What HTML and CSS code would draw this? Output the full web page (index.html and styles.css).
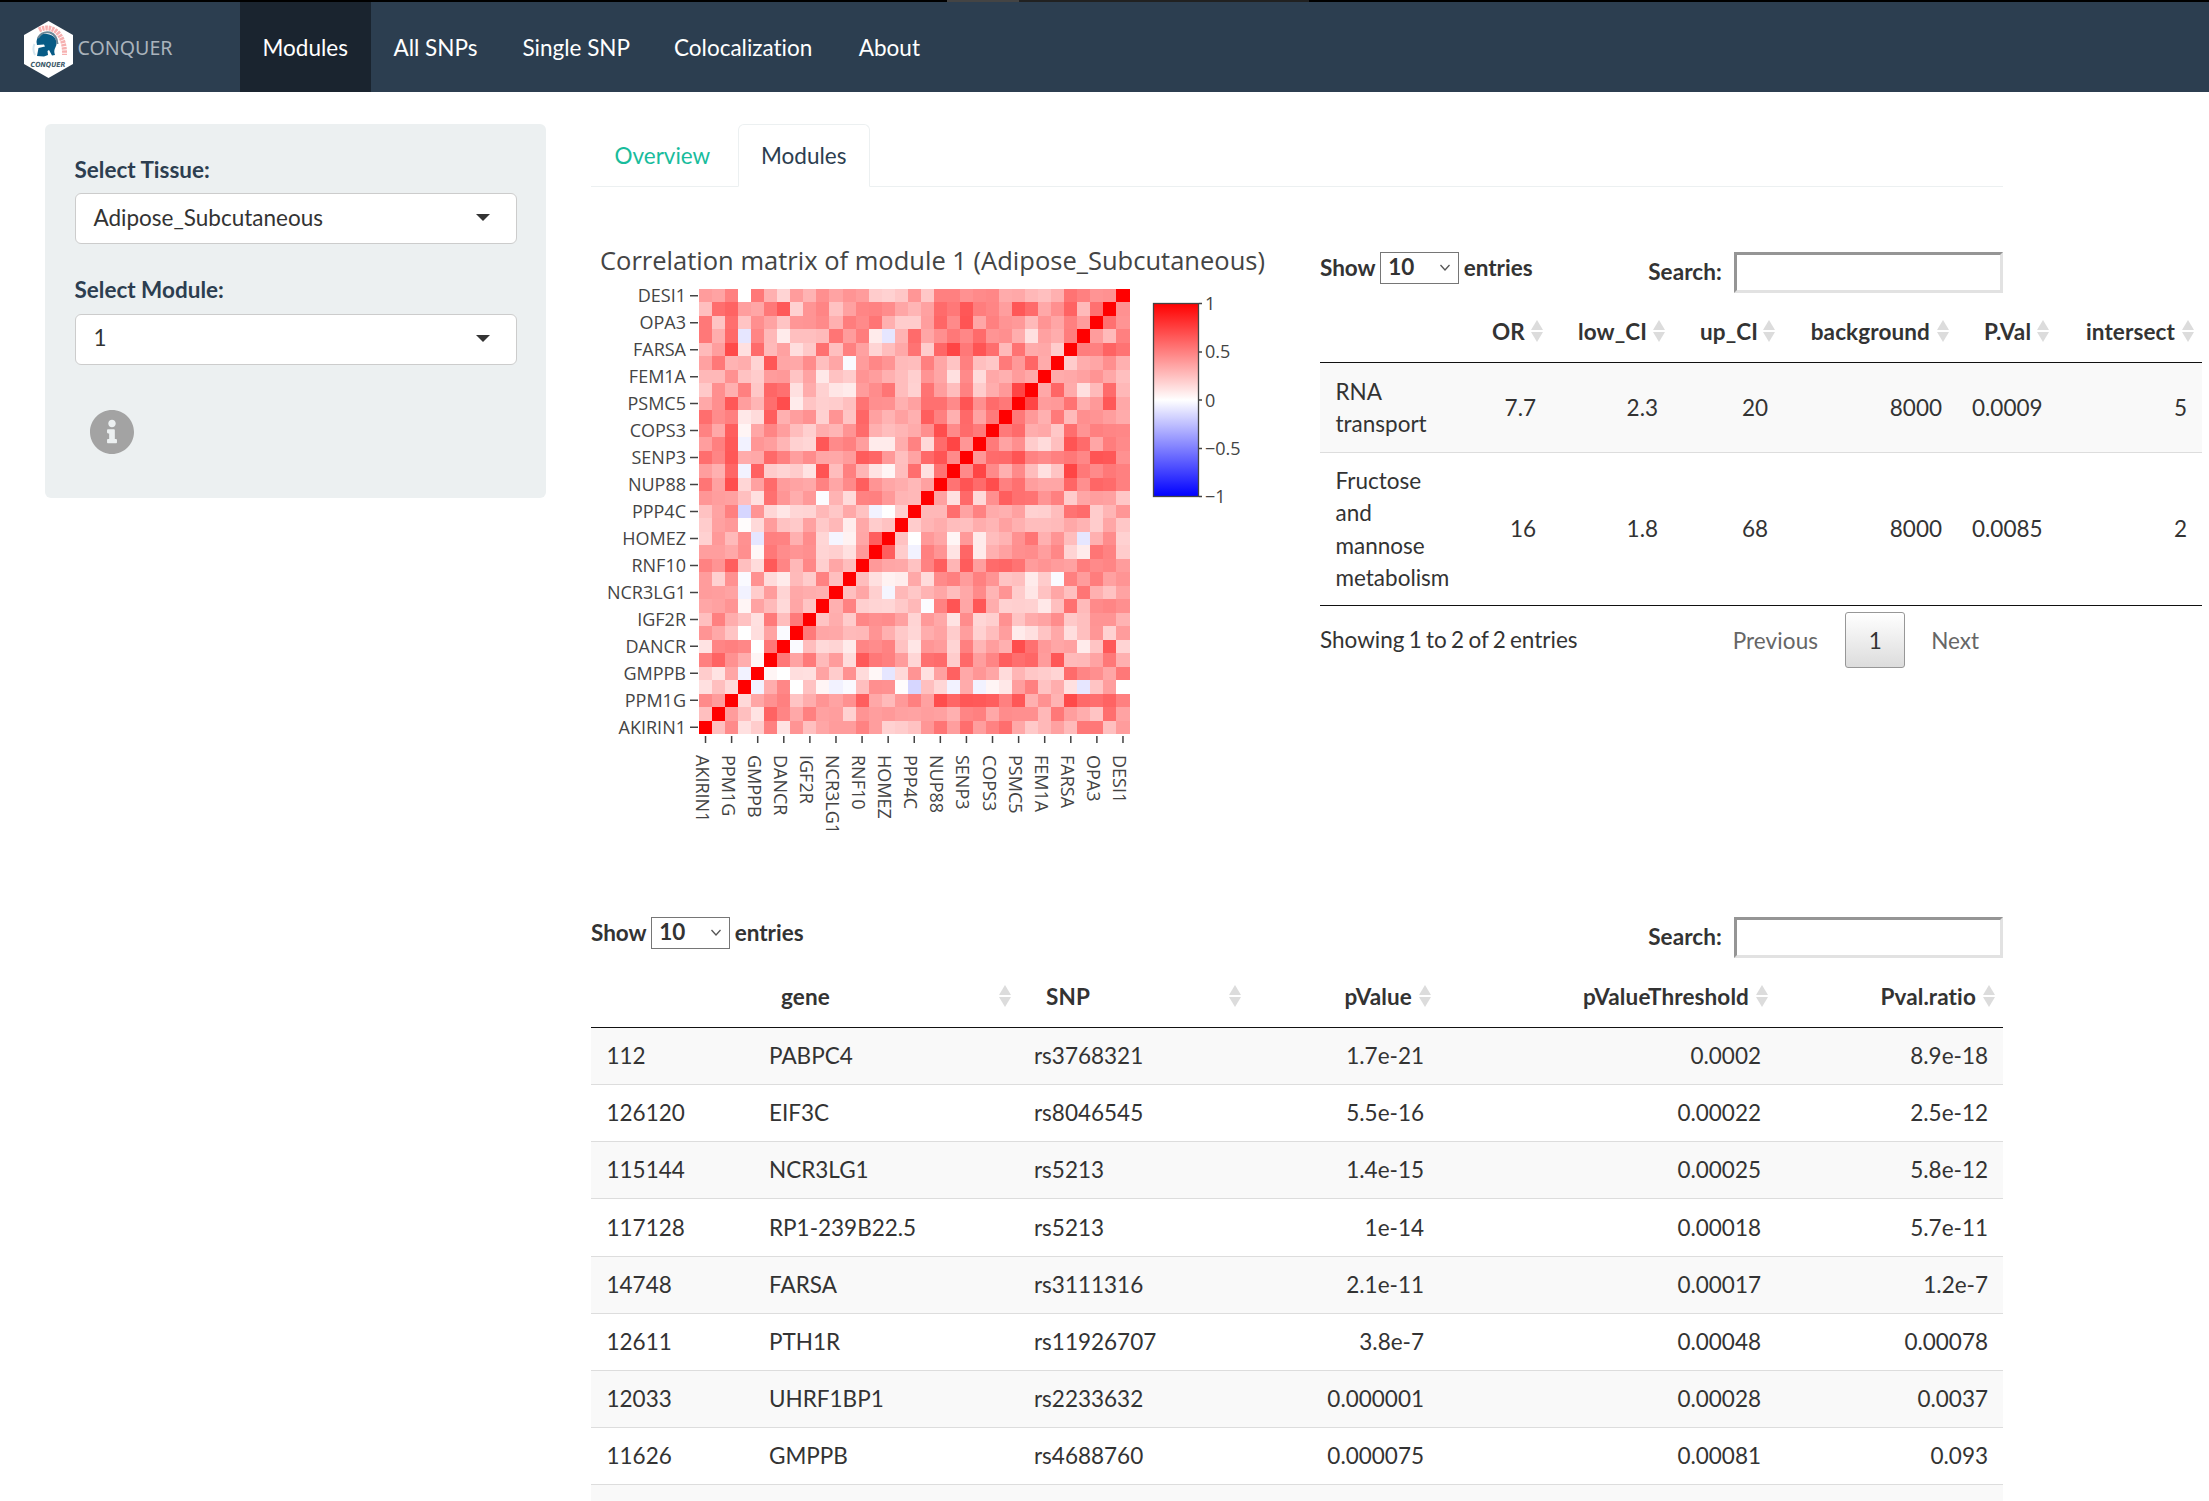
FILE: index.html
```html
<!DOCTYPE html>
<html lang="en">
<head>
<meta charset="utf-8">
<title>CONQUER</title>
<link rel="stylesheet" href="styles.css">
</head>
<body>
<div class="topline"><span class="topline-a"></span><span class="topline-b"></span></div>
<nav class="navbar">
  <div class="brand">
    <svg width="160" height="60" viewBox="0 0 160 60">
      <path d="M26.500 1 L51 15 V44 L26.500 58 L2 44 V15 Z" fill="#fff"/>
      <path d="M17 10 Q27 5 35 12 Q43 20 42.500 35" fill="none" stroke="#f6b0b0" stroke-width="5" stroke-dasharray="2.500 .8"/>
      <path d="M14.500 22 C15 15 20 13 25 14 C32 15 35 19 34.500 24 C34 28 31 29 33 35 L30 35.500 L27 30 L25.500 31 L26 35 L22 36.500 L15 36 L16.500 28 L23 26.500 L22 24.500 L15 25 Z" fill="#075b86"/>
      <path d="M16 18 Q20 11 28 12.500 Q35 15 35.500 24" fill="none" stroke="#6c8798" stroke-width="2"/>
      <path d="M12.500 24 Q10 29 13 35" fill="none" stroke="#d5e6ef" stroke-width="2"/>
      <text x="8.500" y="46.500" class="logo-small" textLength="35" lengthAdjust="spacingAndGlyphs">CONQUER</text>
      <text x="55.500" y="35" class="logo-name" textLength="95" lengthAdjust="spacingAndGlyphs">CONQUER</text>
    </svg>
  </div>
  <a class="nav-item active">Modules</a><a class="nav-item">All SNPs</a><a class="nav-item">Single SNP</a><a class="nav-item colocalization">Colocalization</a><a class="nav-item">About</a>
</nav>
<div class="page">
  <aside class="well">
    <label class="field-label">Select Tissue:</label>
    <div class="select"><span>Adipose_Subcutaneous</span><i class="caret"></i></div>
    <label class="field-label">Select Module:</label>
    <div class="select"><span>1</span><i class="caret"></i></div>
    <svg class="info" viewBox="8 8 496 496"><path d="M256 8C119.043 8 8 119.083 8 256c0 136.997 111.043 248 248 248s248-111.003 248-248C504 119.083 392.957 8 256 8zm0 110c23.196 0 42 18.804 42 42s-18.804 42-42 42-42-18.804-42-42 18.804-42 42-42zm56 254c0 6.627-5.373 12-12 12h-88c-6.627 0-12-5.373-12-12v-24c0-6.627 5.373-12 12-12h12v-64h-12c-6.627 0-12-5.373-12-12v-24c0-6.627 5.373-12 12-12h64c6.627 0 12 5.373 12 12v100h12c6.627 0 12 5.373 12 12v24z" fill="#a3a3a3"/></svg>
  </aside>
  <main class="main">
    <div class="tabs"><a class="tab">Overview</a><a class="tab current">Modules</a></div>
    <div class="upper">
      <svg class="plot" id="plot" width="700" height="640" viewBox="591 230 700 640">
        <defs><linearGradient id="scale" x1="0" y1="0" x2="0" y2="1"><stop offset="0" stop-color="#f00"/><stop offset=".5" stop-color="#fff"/><stop offset="1" stop-color="#00f"/></linearGradient></defs>
        <text x="600" y="269.700" class="plot-title" textLength="665">Correlation matrix of module 1 (Adipose_Subcutaneous)</text>
        <g id="cells" shape-rendering="crispEdges"></g>
        <g id="axes" class="axis"></g>
        <rect x="1153.500" y="303.500" width="45" height="193" fill="url(#scale)" stroke="#444" stroke-width="1.300"/>
        <g class="axis">
          <path d="M1199 303.500h3M1199 352h3M1199 400h3M1199 448.500h3M1199 496.500h3" stroke="#444" stroke-width="1.500"/>
          <text x="1205" y="310">1</text><text x="1205" y="358">0.5</text><text x="1205" y="407">0</text><text x="1205" y="455">−0.5</text><text x="1205" y="503">−1</text>
        </g>
      </svg>
      <section class="enrich">
        <div class="toolbar">
          <div class="length">Show <span class="mini">10<svg width="12" height="8" viewBox="0 0 12 8"><path d="M1.500 1 6 6l4.500-5" fill="none" stroke="#555" stroke-width="1.300"/></svg></span> entries</div>
          <div class="filter">Search:<input type="text" class="search"></div>
        </div>
        <table class="grid grid-enrich">
          <colgroup><col style="width:145px"><col style="width:86px"><col style="width:122px"><col style="width:110px"><col style="width:174px"><col style="width:100px"><col style="width:145px"></colgroup>
          <thead><tr><th></th><th class="num sort">OR</th><th class="num sort">low_CI</th><th class="num sort">up_CI</th><th class="num sort">background</th><th class="num sort">P.Val</th><th class="num sort">intersect</th></tr></thead>
          <tbody>
            <tr class="two-line"><td>RNA transport</td><td class="num">7.7</td><td class="num">2.3</td><td class="num">20</td><td class="num">8000</td><td class="num">0.0009</td><td class="num">5</td></tr>
            <tr class="four-line"><td>Fructose and mannose metabolism</td><td class="num">16</td><td class="num">1.8</td><td class="num">68</td><td class="num">8000</td><td class="num">0.0085</td><td class="num">2</td></tr>
          </tbody>
        </table>
        <div class="footer"><span class="summary">Showing 1 to 2 of 2 entries</span><div class="pager"><span class="page-link">Previous</span><span class="page-now">1</span><span class="page-link">Next</span></div></div>
      </section>
    </div>
    <div class="toolbar">
      <div class="length">Show <span class="mini">10<svg width="12" height="8" viewBox="0 0 12 8"><path d="M1.500 1 6 6l4.500-5" fill="none" stroke="#555" stroke-width="1.300"/></svg></span> entries</div>
      <div class="filter">Search:<input type="text" class="search"></div>
    </div>
    <table class="grid grid-snps">
      <colgroup><col style="width:163px"><col style="width:265px"><col style="width:230px"><col style="width:190px"><col style="width:337px"><col style="width:227px"></colgroup>
      <thead><tr><th></th><th class="sort">gene</th><th class="sort">SNP</th><th class="num sort">pValue</th><th class="num sort">pValueThreshold</th><th class="num sort">Pval.ratio</th></tr></thead>
      <tbody>
        <tr><td>112</td><td>PABPC4</td><td>rs3768321</td><td class="num">1.7e-21</td><td class="num">0.0002</td><td class="num">8.9e-18</td></tr>
        <tr><td>126120</td><td>EIF3C</td><td>rs8046545</td><td class="num">5.5e-16</td><td class="num">0.00022</td><td class="num">2.5e-12</td></tr>
        <tr><td>115144</td><td>NCR3LG1</td><td>rs5213</td><td class="num">1.4e-15</td><td class="num">0.00025</td><td class="num">5.8e-12</td></tr>
        <tr><td>117128</td><td>RP1-239B22.5</td><td>rs5213</td><td class="num">1e-14</td><td class="num">0.00018</td><td class="num">5.7e-11</td></tr>
        <tr><td>14748</td><td>FARSA</td><td>rs3111316</td><td class="num">2.1e-11</td><td class="num">0.00017</td><td class="num">1.2e-7</td></tr>
        <tr><td>12611</td><td>PTH1R</td><td>rs11926707</td><td class="num">3.8e-7</td><td class="num">0.00048</td><td class="num">0.00078</td></tr>
        <tr><td>12033</td><td>UHRF1BP1</td><td>rs2233632</td><td class="num">0.000001</td><td class="num">0.00028</td><td class="num">0.0037</td></tr>
        <tr><td>11626</td><td>GMPPB</td><td>rs4688760</td><td class="num">0.000075</td><td class="num">0.00081</td><td class="num">0.093</td></tr>
        <tr><td></td><td></td><td></td><td></td><td></td><td></td></tr>
      </tbody>
    </table>
  </main>
</div>
<script src="heatmap.js"></script>
</body>
</html>
```
FILE: styles.css
```css
* { box-sizing: border-box; }
html { overflow: hidden; }
body { margin: 0; height: 1501px; overflow: hidden; background: #fff; font-family: Lato, sans-serif; font-size: 22.5px; line-height: 32.14px; color: #333; font-variant-ligatures: none; }
.topline { display: flex; height: 2px; padding-left: 947px; background: #000; }
.topline-a { width: 72px; background: #444; }
.topline-b { width: 290px; background: #212121; }
.navbar { display: flex; height: 90px; background: #2c3e50; color: #fff; }
.brand { width: 240px; padding: 18px 0 0 22px; }
.logo-small { font: italic bold 7px "DejaVu Sans", sans-serif; fill: #3f5b6b; }
.logo-name { font: 19.5px "Noto Sans", sans-serif; fill: #aab3bc; }
.nav-item { padding: 29.5px 22.5px 0; }
.nav-item.active { width: 131px; background: #1a242f; }
.nav-item.colocalization { margin-left: -1px; padding-right: 24px; }

.page { display: flex; align-items: flex-start; gap: 45px; padding: 32px 0 0 45px; }
.well { flex: none; width: 501px; height: 374px; padding: 29.5px; border-radius: 6px; background: #ecf0f1; }
.field-label { display: block; margin-bottom: 7.5px; font-weight: 700; color: #2c3e50; }
.select { display: flex; justify-content: space-between; align-items: center; height: 51px; margin-bottom: 30px; padding: 0 26px 2px 18px; border: 1px solid #ccc; border-radius: 6px; background: #fff; }
.caret { border: 7px solid transparent; border-top: 7.5px solid #333; border-bottom: 0; }
.info { display: block; width: 44px; height: 44px; margin: 45.5px 0 0 15.5px; }

.main { flex: none; width: 1412px; }
.tabs { display: flex; height: 63px; border-bottom: 1px solid #ecf0f1; }
.tab { height: 63px; padding: 16px 23.5px 0; color: #18bc9c; }
.tab:first-child { width: 147px; }
.tab.current { width: 132px; padding-top: 15px; border: 1px solid #ecf0f1; border-bottom-color: #fff; border-radius: 6px 6px 0 0; background: #fff; color: #2c3e50; padding-left: 22px; }

.upper { display: flex; height: 729px; padding-top: 43px; }
.plot { flex: none; margin-right: 29px; }
.plot-title { font: 25.5px "Open Sans", sans-serif; fill: #444; }
.axis text { font: 18px "Open Sans", sans-serif; fill: #444; }
.enrich { flex: none; width: 683px; padding-top: 21px; }

.toolbar { display: flex; justify-content: space-between; height: 49px; font-weight: 700; }
.length { display: flex; gap: 4.5px; height: 34px; align-items: center; }
.mini { display: flex; align-items: center; justify-content: space-between; width: 79px; height: 32px; padding: 0 7px 1px; border: 1.5px solid #767676; }
.filter { display: flex; align-items: center; gap: 12px; height: 42px; letter-spacing: .1px; }
.search { width: 269px; height: 41px; margin: 0; border: 3px solid; border-color: #959595 #e2e2e2 #e2e2e2 #959595; background: #fff; }

.grid { table-layout: fixed; border-collapse: separate; border-spacing: 0; }
.grid-enrich { width: 882px; }
.grid-snps { width: 1412px; }
.grid th { height: 63px; padding: 2px 27px 0; border-bottom: 1px solid #111; font-weight: 700; letter-spacing: .12px; text-align: left; vertical-align: middle; }
.grid td { height: 57px; padding: 1px 15px 0; border-bottom: 1px solid #ddd; vertical-align: middle; }
.grid td:first-child { padding-left: 15.5px; }
.grid .num { text-align: right; }
.grid tbody tr:nth-child(odd) { background: #f9f9f9; }
.grid-snps tbody tr:nth-child(4) td { height: 58px; }
.grid .two-line td { height: 90px; }
.grid .four-line td { height: 153px; border-bottom-color: #111; }
.sort { position: relative; white-space: nowrap; }
.sort::before, .sort::after { content: ""; position: absolute; right: 8px; border: 6px solid transparent; }
.sort::before { top: 20px; border-top: 0; border-bottom: 10px solid #dcdcdc; }
.sort::after { top: 32px; border-bottom: 0; border-top: 10px solid #dcdcdc; }

.footer { display: flex; justify-content: space-between; align-items: center; height: 56px; margin-top: 6px; }
.summary { word-spacing: -1.5px; }
.pager { display: flex; align-items: center; }
.page-link { padding: 2px 24px 0 26px; color: #666; }
.page-link:first-child { padding-right: 27px; letter-spacing: .1px; }
.page-now { width: 60px; height: 56px; padding-top: 12px; border: 1px solid #979797; border-radius: 3px; background: linear-gradient(#fff, #dcdcdc); text-align: center; }
```
FILE: heatmap.js
```js
// Correlation percentages, one row per gene, up to the diagonal (always 100).
const lower = [
  [],
  [25],
  [46,39],
  [12,25,15],
  [20,11,35,-5],
  [50,61,43,32,4],
  [11,48,50,47,0,53],
  [42,34,23,0,13,36,-2],
  [25,50,32,24,12,52,26,52],
  [35,37,42,4,36,27,15,35,23],
  [39,38,36,-5,20,39,17,34,32,31],
  [39,18,43,-2,43,14,8,27,20,49,25],
  [49,42,63,25,14,65,48,28,47,19,35,26],
  [38,38,34,44,3,53,45,42,44,17,19,12,40],
  [18,40,27,43,-10,50,49,31,45,16,-4,5,35,63],
  [20,37,40,1,15,39,24,21,37,21,28,7,34,20,24],
  [24,36,50,-16,42,16,10,16,17,28,22,34,24,-5,0,20],
  [41,38,37,25,12,56,41,32,40,-1,30,14,49,50,40,29,28],
  [54,37,70,16,37,58,39,36,34,49,35,46,63,42,35,32,28,37],
  [38,31,60,-5,62,20,17,20,11,67,26,50,29,11,4,26,57,12,55],
  [57,48,66,33,34,59,50,38,45,35,34,39,64,60,40,25,36,59,67,46],
  [38,50,65,-5,41,38,29,18,16,66,46,50,38,8,8,32,49,15,58,73,41],
  [49,34,63,4,35,48,38,26,19,32,29,42,58,31,26,29,33,44,70,46,58,52],
  [57,45,50,9,14,63,31,38,43,18,42,23,60,37,30,37,31,63,50,31,59,36,52],
  [34,44,66,38,29,57,70,8,23,19,20,25,55,44,43,31,37,56,56,46,67,44,58,53],
  [21,44,31,50,22,60,56,12,33,18,10,8,39,45,54,26,18,55,38,26,49,20,32,40,73],
  [28,28,43,24,20,39,40,23,36,9,24,20,42,38,31,26,19,42,35,12,46,14,34,31,39,34],
  [37,53,30,32,17,66,35,34,45,25,35,-2,39,47,42,27,26,50,35,23,50,25,22,52,40,60,33],
  [27,38,71,12,58,27,37,13,21,56,25,50,37,17,26,34,55,20,60,73,53,67,57,27,55,33,34,20],
  [53,32,59,-10,48,28,8,25,25,27,54,39,51,8,-10,30,58,35,44,53,47,58,42,44,32,12,37,32,51],
  [53,23,57,23,44,36,23,41,42,46,31,51,46,54,31,20,20,38,60,46,67,35,50,42,40,27,42,35,50,39],
  [25,57,61,38,35,53,65,18,42,48,24,37,48,49,45,35,29,37,58,53,66,51,48,38,66,58,34,44,61,27,56],
  [39,36,50,0,53,31,17,39,30,44,36,42,39,20,18,22,41,22,50,50,43,46,47,33,34,28,25,31,55,50,42,43]
];
const genes = ["AKIRIN1","PPM1G","GMPPB","DANCR","IGF2R","NCR3LG1","RNF10","HOMEZ","PPP4C","NUP88","SENP3","COPS3","PSMC5","FEM1A","FARSA","OPA3","DESI1"];
const n = 33, left = 699, right = 1129.5, top0 = 289, bottom = 734;
const cw = (right - left) / n, ch = (bottom - top0) / n;
const value = (r, c) => r === c ? 100 : r > c ? lower[r][c] : lower[c][r];
function color(v) {
  const k = Math.round(255 * (1 - Math.abs(v) / 100));
  return v < 0 ? `rgb(${k},${k},255)` : `rgb(255,${k},${k})`;
}
let cells = "";
for (let r = 0; r < n; r++) {
  for (let c = 0; c < n; c++) {
    const x = Math.round(left + c * cw), x2 = Math.round(left + (c + 1) * cw);
    const y = Math.round(bottom - (r + 1) * ch), y2 = Math.round(bottom - r * ch);
    cells += `<rect x="${x}" y="${y}" width="${x2 - x}" height="${y2 - y}" fill="${color(value(r, c))}"/>`;
  }
}
document.getElementById("cells").innerHTML = cells;
let axes = "";
genes.forEach((g, i) => {
  const x = left + (2 * i + 0.5) * cw, y = bottom - (2 * i + 0.5) * ch;
  axes += `<path d="M690 ${y}h8M${x} 736v7" stroke="#444" stroke-width="1.500"/>`;
  axes += `<text x="686" y="${y + 6.5}" text-anchor="end">${g}</text>`;
  axes += `<text transform="translate(${x - 10} 755) rotate(90)">${g}</text>`;
});
document.getElementById("axes").innerHTML = axes;
```
